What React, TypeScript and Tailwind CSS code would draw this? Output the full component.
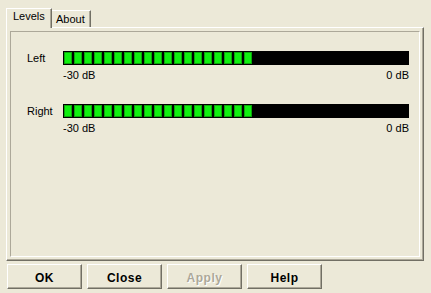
import React from 'react';

const SEGMENTS = 19;

function Meter({ label }: { label: string }) {
  return (
    <div>
      <div className="flex items-center">
        <span className="w-[36px] leading-[13px]">{label}</span>
        <div className="flex h-[14px] w-[346px] gap-[2px] bg-black p-[1px]">
          {Array.from({ length: SEGMENTS }).map((_, i) => (
            <div key={i} className="h-full w-[8px] bg-[#10f010] shadow-[inset_0_0_0_1px_#0aa80a]" />
          ))}
        </div>
      </div>
      <div className="ml-[36px] mt-[4px] flex w-[346px] justify-between leading-[13px]">
        <span>-30 dB</span>
        <span>0 dB</span>
      </div>
    </div>
  );
}

function Button({ children, disabled }: { children: React.ReactNode; disabled?: boolean }) {
  return (
    <button
      className={
        disabled
          ? "flex h-[25px] w-[75px] items-center justify-center border border-t-white border-l-white border-r-[#716f64] border-b-[#716f64] bg-[#ece9d8] pt-[2px] text-[12px] font-bold tracking-[0.5px] text-[#aca899] shadow-[inset_-1px_-1px_0_#aca899] [text-shadow:1px_1px_0_#fff]"
          : "flex h-[25px] w-[75px] items-center justify-center border border-t-white border-l-white border-r-[#716f64] border-b-[#716f64] bg-[#ece9d8] pt-[2px] text-[12px] font-bold tracking-[0.5px] text-black shadow-[inset_-1px_-1px_0_#aca899]"
      }
    >
      {children}
    </button>
  );
}

export default function App() {
  return (
    <div className="h-[293px] w-[431px] overflow-hidden bg-[#ece9d8] font-['Liberation_Sans',Arial,sans-serif] text-[11px] text-black">
      {/* Tabs */}
      <div className="flex h-[27px] items-end pl-[6px] pt-[8px]">
        <div className="relative z-10 -mb-px h-[20px] w-[46px] border-l border-t border-r border-l-white border-t-white border-r-[#716f64] bg-[#ece9d8] pl-[6px] pt-[1px] leading-[13px] shadow-[inset_-1px_0_0_#aca899]">
          Levels
        </div>
        <div className="h-[17px] w-[39px] border-t border-r border-t-white border-r-[#716f64] pl-[4px] pt-[2px] leading-[13px] shadow-[inset_-1px_0_0_#aca899]">
          About
        </div>
      </div>

      {/* Panel */}
      <div className="ml-[6px] h-[234px] w-[418px] border border-t-white border-l-white border-r-[#716f64] border-b-[#716f64] p-[3px] shadow-[inset_-1px_-1px_0_#aca899]">
        <div className="h-full w-full border border-t-[#aca899] border-l-[#aca899] border-r-white border-b-white pl-[16px] pt-[19px]">
          <Meter label="Left" />
          <div className="mt-[22px]">
            <Meter label="Right" />
          </div>
        </div>
      </div>

      {/* Buttons */}
      <div className="mt-[3px] flex gap-[5px] pl-[7px]">
        <Button>OK</Button>
        <Button>Close</Button>
        <Button disabled>Apply</Button>
        <Button>Help</Button>
      </div>
    </div>
  );
}
